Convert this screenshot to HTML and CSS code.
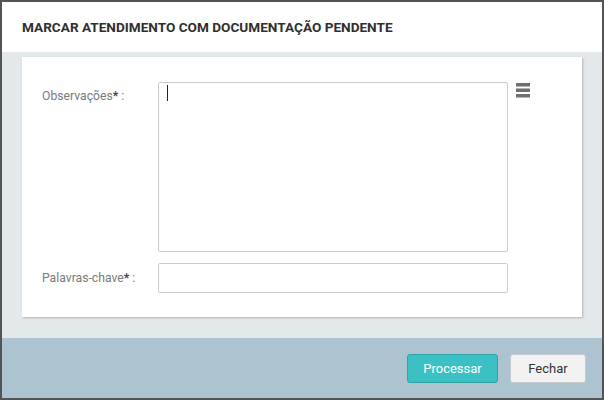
FILE: index.html
```html
<!DOCTYPE html>
<html lang="pt">
<head>
<meta charset="utf-8">
<title>Marcar atendimento</title>
<link rel="stylesheet" href="styles.css">
</head>
<body>
<div class="dialog">
  <div class="header">MARCAR ATENDIMENTO COM DOCUMENTAÇÃO PENDENTE</div>
  <div class="content">
    <div class="card">
      <div class="row row-top">
        <div class="label label-top">Observações<b>*</b> :</div>
        <div class="textarea"><span class="caret"></span></div>
        <svg class="menu-icon" width="14" height="15" viewBox="0 0 14 15">
          <rect x="0" y="0" width="14" height="3.5" fill="#6f6f6f"/>
          <rect x="0" y="5.5" width="14" height="3.5" fill="#6f6f6f"/>
          <rect x="0" y="11" width="14" height="3.5" fill="#6f6f6f"/>
        </svg>
      </div>
      <div class="row row-mid">
        <div class="label">Palavras-chave<b>*</b> :</div>
        <div class="input"></div>
      </div>
    </div>
  </div>
  <div class="footer">
    <button class="btn btn-primary">Processar</button>
    <button class="btn btn-default">Fechar</button>
  </div>
</div>
</body>
</html>
```

FILE: styles.css
```css
html, body {
  margin: 0;
  padding: 0;
}
body {
  font-family: Roboto, "Liberation Sans", Arial, sans-serif;
  background: #ffffff;
}
.dialog {
  width: 604px;
  height: 400px;
  box-sizing: border-box;
  border: 2px solid #545454;
  display: flex;
  flex-direction: column;
  background: #ffffff;
}
.header {
  height: 50px;
  flex: none;
  display: flex;
  align-items: center;
  padding-left: 20px;
  font-size: 13.6px;
  font-weight: bold;
  color: #2f2f2f;
  background: #ffffff;
}
.content {
  flex: 1;
  background: #e3e8eb;
  padding: 5px 20px 0 20px;
}
.card {
  height: 260px;
  box-sizing: border-box;
  background: #ffffff;
  box-shadow: 1px 1px 2px rgba(0, 0, 0, 0.22);
  padding: 25px 20px 0 20px;
  display: flex;
  flex-direction: column;
  gap: 11px;
}
.row {
  display: flex;
  align-items: center;
}
.row-top {
  align-items: flex-start;
}
.label {
  width: 116px;
  flex: none;
  font-size: 12.2px;
  color: #7a7a7a;
}
.label b {
  color: #444;
  font-weight: bold;
}
.label-top {
  padding-top: 7px;
}
.textarea {
  width: 350px;
  height: 170px;
  box-sizing: border-box;
  border: 1px solid #cccccc;
  border-radius: 2px;
  padding: 2px 0 0 8px;
  display: flex;
  align-items: flex-start;
}
.caret {
  display: block;
  width: 1px;
  height: 16px;
  background: #222;
}
.menu-icon {
  margin-left: 8px;
  margin-top: 1px;
  display: block;
}
.input {
  width: 350px;
  height: 30px;
  box-sizing: border-box;
  border: 1px solid #cccccc;
  border-radius: 2px;
}
.footer {
  height: 60px;
  flex: none;
  background: #adc4d0;
  display: flex;
  justify-content: flex-end;
  align-items: center;
  gap: 12px;
  padding-right: 16px;
  padding-top: 1px;
  box-sizing: border-box;
}
.btn {
  height: 29px;
  box-sizing: border-box;
  border-radius: 3px;
  font-family: Roboto, "Liberation Sans", Arial, sans-serif;
  font-size: 13px;
  padding: 0;
  cursor: pointer;
}
.btn-primary {
  width: 91px;
  background: #3bc1c3;
  border: 1px solid #2ea4a7;
  color: #ffffff;
}
.btn-default {
  width: 76px;
  background: #f2f2f2;
  border: 1px solid #c4ccd1;
  color: #333333;
}
```
